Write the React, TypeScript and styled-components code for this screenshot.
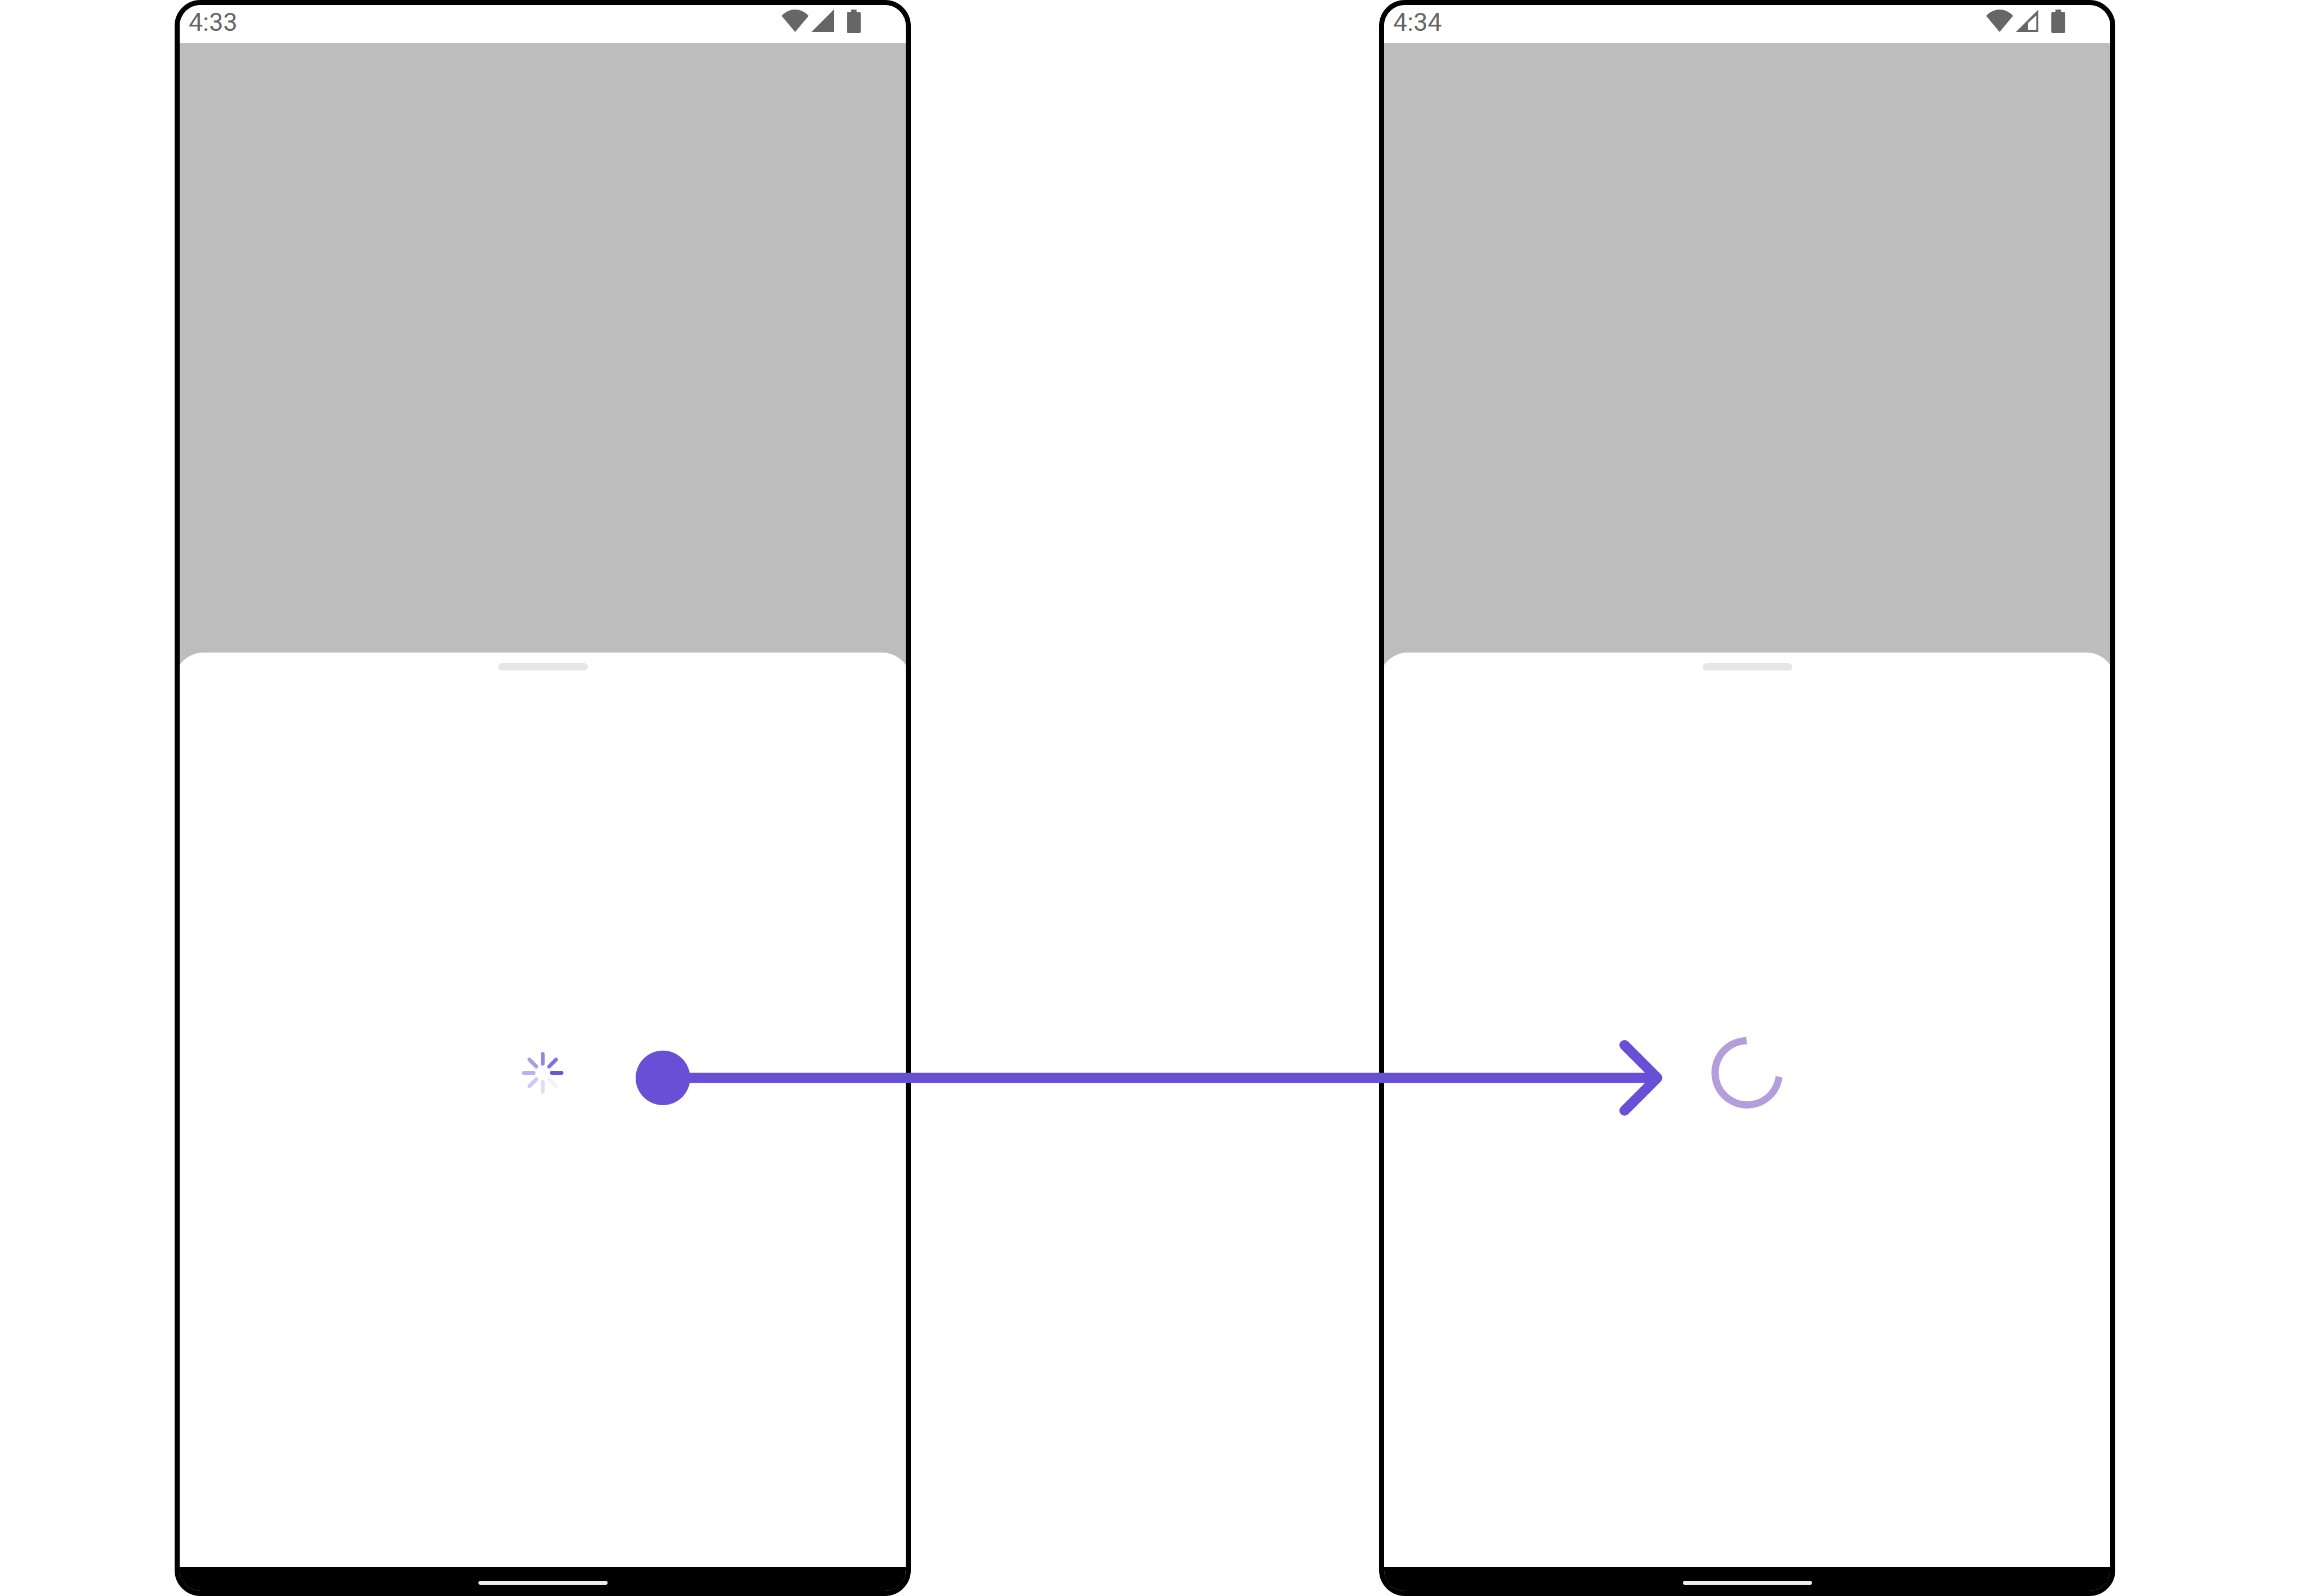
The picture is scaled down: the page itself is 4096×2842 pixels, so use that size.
import React from 'react';
import styled, { createGlobalStyle } from 'styled-components';

const ACCENT = '#6750d5';
const ICON = '#666666';

const GlobalStyle = createGlobalStyle`
  * { box-sizing: border-box; }
  body { margin: 0; background: #ffffff; }
`;

const Board = styled.main`
  position: relative;
  display: grid;
  grid-template-columns: 311fr 1311fr 834fr 1311fr 329fr;
  min-height: 100vh;
  overflow: hidden;
  font-family: Roboto, 'Liberation Sans', sans-serif;
`;

const Phone = styled.section<{ $column: number }>`
  grid-column: ${(p) => p.$column};
  grid-row: 1;
  display: flex;
  flex-direction: column;
  border: 9px solid #000000;
  border-radius: 46px;
  background: #bdbdbd;
  overflow: hidden;
`;

const StatusBar = styled.header`
  display: flex;
  justify-content: space-between;
  align-items: flex-start;
  height: 68px;
  padding: 8px 80px 0 16px;
  background: #ffffff;
`;

const Clock = styled.time`
  font-size: 45px;
  line-height: 46px;
  color: ${ICON};
`;

const StatusIcons = styled.div`
  display: flex;
  align-items: flex-start;
  gap: 5px;
`;

const StatusIcon = styled.svg<{ $width: number; $height: number }>`
  display: block;
  width: ${(p) => p.$width}px;
  height: ${(p) => p.$height}px;
  fill: ${ICON};
`;

const BatterySlot = styled.div`
  padding-left: 18px;
`;

const Scrim = styled.div`
  flex: 2 0 0;
`;

const Sheet = styled.div`
  flex: 3 0 0;
  display: flex;
  flex-direction: column;
  align-items: center;
  margin: 0 -9px;
  border-radius: 51px 51px 0 0;
  background: #ffffff;
`;

const Handle = styled.div`
  width: 160px;
  height: 13px;
  margin-top: 19px;
  border-radius: 7px;
  background: #e6e6e6;
`;

const SheetBody = styled.div`
  flex: 1;
  display: flex;
  align-items: center;
  justify-content: center;
  padding-bottom: 163px;
`;

const Loader = styled.svg<{ $size: number }>`
  display: block;
  width: ${(p) => p.$size}px;
  height: ${(p) => p.$size}px;
`;

const NavBar = styled.footer`
  display: flex;
  justify-content: center;
  height: 43px;
  padding-top: 25px;
  background: #000000;
`;

const HomePill = styled.div`
  width: 230px;
  height: 7px;
  border-radius: 4px;
  background: #ebebeb;
`;

const FlowArrow = styled.svg`
  position: absolute;
  left: 27.64%;
  top: 65.18%;
  width: 44.64%;
  height: auto;
`;

const WifiIcon = () => (
  <StatusIcon $width={48} $height={40} viewBox="0 0 53 44" aria-hidden="true">
    <path d="M26.5 44 L0 12.3 C7 4.8 16 0 26.5 0 S46 4.8 53 12.3 Z" />
  </StatusIcon>
);

const SignalIcon = ({ weak }: { weak: boolean }) => (
  <StatusIcon $width={40} $height={40} viewBox="0 0 44 44" aria-hidden="true">
    <path
      fillRule="evenodd"
      d={weak ? 'M0 44 L44 0 V44 Z M40 11.5 L24 26 V39.7 H40 Z' : 'M0 44 L44 0 V44 Z'}
    />
  </StatusIcon>
);

const BatteryIcon = () => (
  <StatusIcon $width={25} $height={42} viewBox="0 0 27 46" aria-hidden="true">
    <path d="M8 0 H19 V4.7 H24 Q27 4.7 27 7.7 V43 Q27 46 24 46 H3 Q0 46 0 43 V7.7 Q0 4.7 3 4.7 H8 Z" />
  </StatusIcon>
);

const SPOKES = ['#6c55d6', '#f3f1fb', '#e0dbf6', '#cfc8f2', '#bcb1ec', '#a99ce8', '#9585e2', '#8370dd'];

const SpokeSpinner = () => (
  <Loader $size={75} viewBox="-41 -41 82 82" role="img" aria-label="Loading">
    {SPOKES.map((color, i) => (
      <line
        key={color}
        x1="17.7"
        x2="36.7"
        y1="0"
        y2="0"
        stroke={color}
        strokeWidth="7.4"
        strokeLinecap="round"
        transform={`rotate(${i * 45})`}
      />
    ))}
  </Loader>
);

const RingSpinner = () => (
  <Loader $size={129} viewBox="-71 -71 142 142" role="img" aria-label="Loading">
    <path
      fill="#b39ddb"
      d="M69.3 9 A70 70 0 1 1 -1.7 -70.2 L-0.3 -56.2 A56 56 0 1 0 55.7 6 Z"
    />
  </Loader>
);

interface DeviceProps {
  column: number;
  time: string;
  weakSignal?: boolean;
  children: React.ReactNode;
}

const Device = ({ column, time, weakSignal = false, children }: DeviceProps) => (
  <Phone $column={column}>
    <StatusBar>
      <Clock>{time}</Clock>
      <StatusIcons>
        <WifiIcon />
        <SignalIcon weak={weakSignal} />
        <BatterySlot>
          <BatteryIcon />
        </BatterySlot>
      </StatusIcons>
    </StatusBar>
    <Scrim />
    <Sheet>
      <Handle />
      <SheetBody>{children}</SheetBody>
    </Sheet>
    <NavBar>
      <HomePill />
    </NavBar>
  </Phone>
);

export default function App() {
  return (
    <>
      <GlobalStyle />
      <Board>
        <Device column={2} time="4:33">
          <SpokeSpinner />
        </Device>
        <Device column={4} time="4:34" weakSignal>
          <RingSpinner />
        </Device>
        <FlowArrow viewBox="0 0 2008 148" aria-hidden="true">
          <circle cx="53.3" cy="74" r="53.3" fill={ACCENT} />
          <path
            d="M53 74 H1998 M1934 10 L1998 74 L1934 138"
            fill="none"
            stroke={ACCENT}
            strokeWidth="20"
            strokeLinecap="round"
            strokeLinejoin="round"
          />
        </FlowArrow>
      </Board>
    </>
  );
}
